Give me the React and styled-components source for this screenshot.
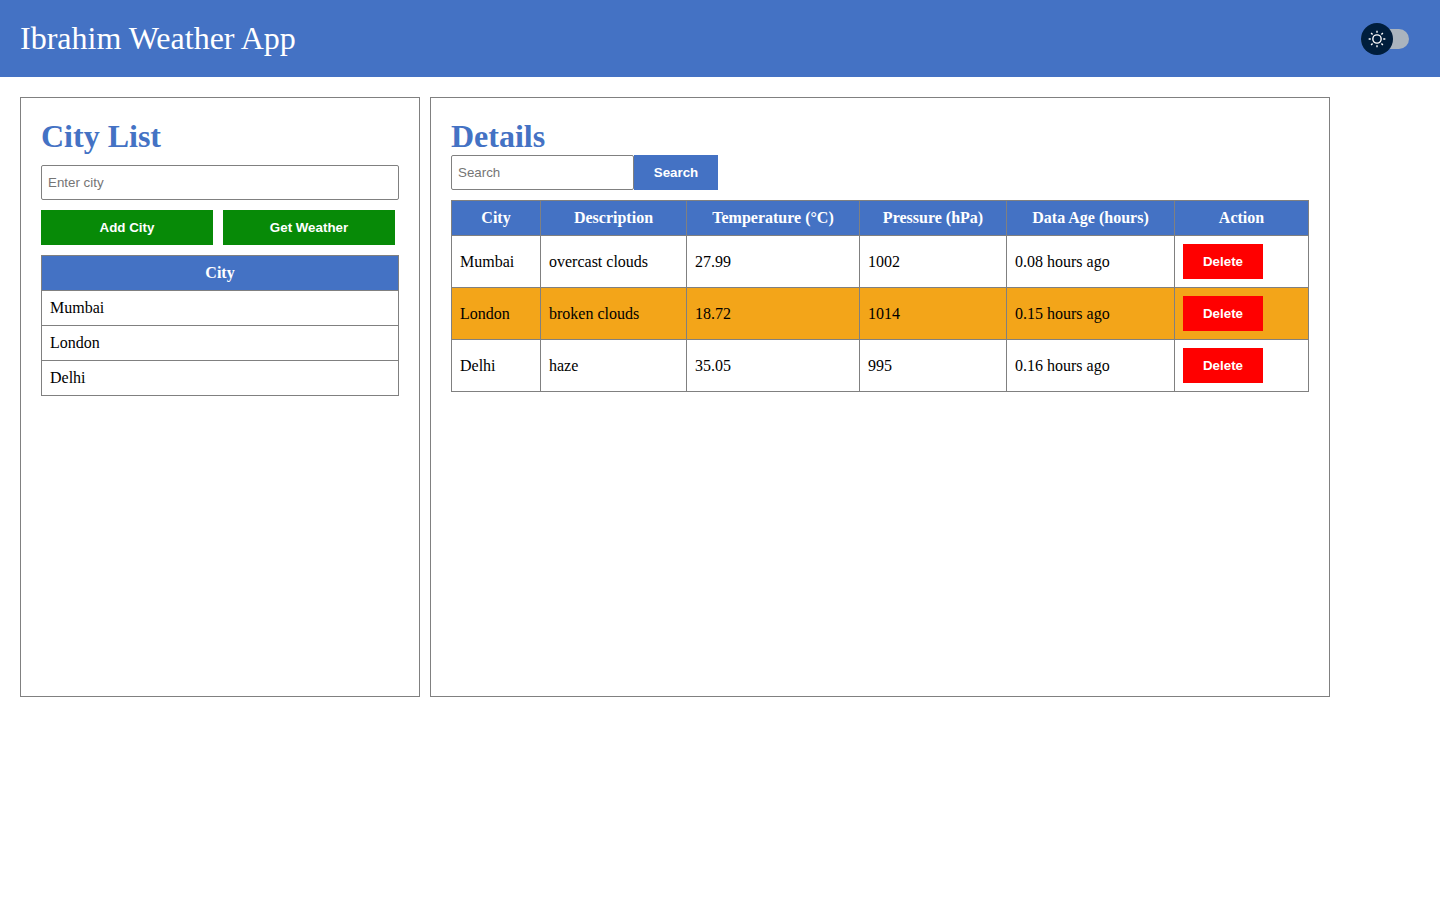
import React from "react";
import styled, { createGlobalStyle } from "styled-components";

const GlobalStyle = createGlobalStyle`
  body {
    margin: 0;
    background: #fff;
    font-family: "Liberation Serif", "Times New Roman", serif;
    color: #000;
  }
`;

const blue = "#4472c4";
const line = "#808080";

const Header = styled.header`
  display: flex;
  align-items: center;
  justify-content: space-between;
  height: 77px;
  padding: 0 24px 0 20px;
  background: ${blue};
`;

const Title = styled.h1`
  margin: 0;
  font-size: 32px;
  font-weight: normal;
  color: #fff;
`;

const Toggle = styled.div`
  position: relative;
  width: 62px;
  height: 34px;
  padding: 7px;
  box-sizing: border-box;
`;

const Track = styled.div`
  height: 20px;
  border-radius: 10px;
  background: #aab4be;
`;

const Thumb = styled.div`
  position: absolute;
  top: 1px;
  left: 7px;
  display: flex;
  align-items: center;
  justify-content: center;
  width: 32px;
  height: 32px;
  border-radius: 50%;
  background: #001e3c;
`;

const Main = styled.main`
  display: flex;
  gap: 10px;
  padding: 20px;
`;

const Panel = styled.section`
  box-sizing: border-box;
  width: ${(p) => p.$width}px;
  height: 600px;
  padding: 20px;
  border: 1px solid ${line};
`;

const Heading = styled.h2`
  margin: 0;
  font-size: 32px;
  line-height: 37px;
  font-weight: bold;
  color: ${blue};
`;

const TextInput = styled.input`
  box-sizing: border-box;
  display: block;
  width: ${(p) => p.$width}px;
  height: 35px;
  padding: 0 6px;
  border: 1px solid ${line};
  border-radius: 2px;
  outline: none;
  font-family: "Liberation Sans", Arial, sans-serif;
  font-size: 13.333px;
  &::placeholder {
    color: #757575;
  }
`;

const CityInput = styled(TextInput)`
  margin: 10px 0;
`;

const Button = styled.button`
  box-sizing: border-box;
  display: block;
  width: ${(p) => p.$width}px;
  height: 35px;
  padding: 0;
  border: none;
  background: ${(p) => p.$bg};
  color: #fff;
  font-family: "Liberation Sans", Arial, sans-serif;
  font-size: 13.333px;
  font-weight: bold;
`;

const ButtonRow = styled.div`
  display: flex;
  gap: 10px;
  margin-bottom: 10px;
`;

const SearchRow = styled.div`
  display: flex;
  margin-bottom: 10px;
`;

const Table = styled.table`
  width: ${(p) => p.$width}px;
  table-layout: fixed;
  border-collapse: collapse;
  font-size: 16px;
`;

const Th = styled.th`
  width: ${(p) => p.$width}px;
  box-sizing: border-box;
  height: 35px;
  padding: 8px;
  border: 1px solid ${line};
  background: ${blue};
  color: #fff;
  font-weight: bold;
  text-align: center;
`;

const Td = styled.td`
  box-sizing: border-box;
  height: 35px;
  padding: 8px;
  border: 1px solid ${line};
  text-align: left;
`;

const Tr = styled.tr`
  background: ${(p) => (p.$warm ? "#f3a519" : "#fff")};
`;

const DataTd = styled(Td)`
  height: 52px;
`;

const cities = ["Mumbai", "London", "Delhi"];

const columns = [
  ["City", 89],
  ["Description", 146],
  ["Temperature (°C)", 173],
  ["Pressure (hPa)", 147],
  ["Data Age (hours)", 168],
  ["Action", 134],
];

const rows = [
  ["Mumbai", "overcast clouds", "27.99", "1002", "0.08 hours ago"],
  ["London", "broken clouds", "18.72", "1014", "0.15 hours ago"],
  ["Delhi", "haze", "35.05", "995", "0.16 hours ago"],
];

const SunIcon = () => (
  <svg width="20" height="20" viewBox="0 0 20 20">
    <path
      fill="#fff"
      d="M9.305 1.667V3.75h1.389V1.667h-1.39zm-4.707 1.95l-.982.982L5.09 6.072l.982-.982-1.473-1.473zm10.802 0L13.927 5.09l.982.982 1.473-1.473-.982-.982zM10 5.139a4.872 4.872 0 00-4.862 4.86A4.872 4.872 0 0010 14.862 4.872 4.872 0 0014.86 10 4.872 4.872 0 0010 5.139zm0 1.389A3.462 3.462 0 0113.471 10a3.462 3.462 0 01-3.473 3.472A3.462 3.462 0 016.527 10 3.462 3.462 0 0110 6.528zM1.665 9.305v1.39h2.083v-1.39H1.666zm14.583 0v1.39h2.084v-1.39h-2.084zM5.09 13.928L3.616 15.4l.982.982 1.473-1.473-.982-.982zm9.82 0l-.982.982 1.473 1.473.982-.982-1.473-1.473zM9.305 16.25v2.083h1.389V16.25h-1.39z"
    />
  </svg>
);

export default function App() {
  return (
    <>
      <GlobalStyle />
      <Header>
        <Title>Ibrahim Weather App</Title>
        <Toggle>
          <Track />
          <Thumb>
            <SunIcon />
          </Thumb>
        </Toggle>
      </Header>
      <Main>
        <Panel $width={400}>
          <Heading>City List</Heading>
          <CityInput $width={358} placeholder="Enter city" />
          <ButtonRow>
            <Button $width={172} $bg="#078a07">Add City</Button>
            <Button $width={172} $bg="#078a07">Get Weather</Button>
          </ButtonRow>
          <Table $width={358}>
            <thead>
              <tr>
                <Th>City</Th>
              </tr>
            </thead>
            <tbody>
              {cities.map((city) => (
                <Tr key={city}>
                  <Td>{city}</Td>
                </Tr>
              ))}
            </tbody>
          </Table>
        </Panel>
        <Panel $width={900}>
          <Heading>Details</Heading>
          <SearchRow>
            <TextInput $width={183} placeholder="Search" />
            <Button $width={84} $bg={blue}>Search</Button>
          </SearchRow>
          <Table $width={858}>
            <thead>
              <tr>
                {columns.map(([label, width]) => (
                  <Th key={label} $width={width}>{label}</Th>
                ))}
              </tr>
            </thead>
            <tbody>
              {rows.map((row) => (
                <Tr key={row[0]} $warm={row[0] === "London"}>
                  {row.map((cell) => (
                    <DataTd key={cell}>{cell}</DataTd>
                  ))}
                  <DataTd>
                    <Button $width={80} $bg="#ff0000">Delete</Button>
                  </DataTd>
                </Tr>
              ))}
            </tbody>
          </Table>
        </Panel>
      </Main>
    </>
  );
}
